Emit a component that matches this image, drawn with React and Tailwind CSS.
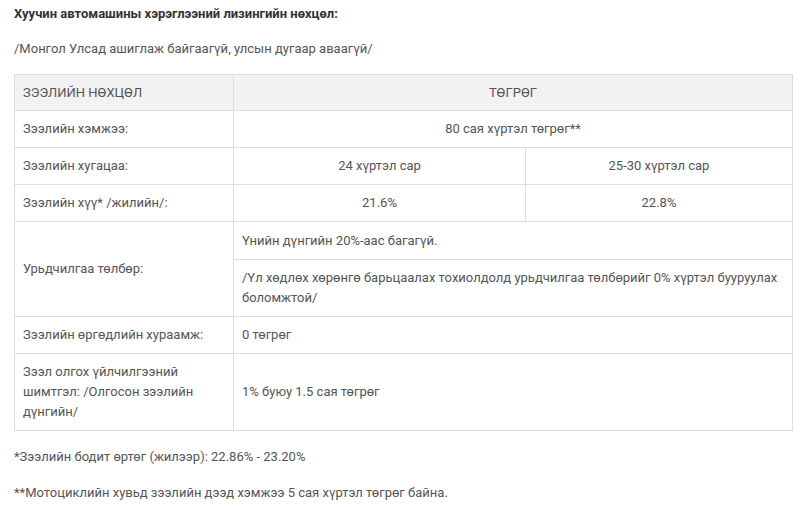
export default function App() {
  const cell = "border border-[#dddddd] px-2 py-2 align-middle";

  return (
    <div className="min-h-screen bg-white px-[14px] pt-[4px] font-['Roboto',sans-serif] text-[13px] leading-5 text-[#555]">
      <p className="font-bold text-[#333]">
        Хуучин автомашины хэрэглээний лизингийн нөхцөл:
      </p>
      <p className="mt-[15px]">/Монгол Улсад ашиглаж байгаагүй, улсын дугаар аваагүй/</p>

      <table className="mt-[15px] w-[778px] table-fixed border-collapse border border-[#dddddd]">
        <colgroup>
          <col className="w-[219px]" />
          <col className="w-[292px]" />
          <col className="w-[267px]" />
        </colgroup>
        <thead>
          <tr className="bg-[#f2f2f2]">
            <th className={`${cell} pt-[8px] pb-[7px] text-left font-normal uppercase`}>Зээлийн нөхцөл</th>
            <th colSpan={2} className={`${cell} pt-[8px] pb-[7px] text-center font-normal uppercase`}>
              Төгрөг
            </th>
          </tr>
        </thead>
        <tbody>
          <tr>
            <td className={cell}>Зээлийн хэмжээ:</td>
            <td colSpan={2} className={`${cell} text-center`}>
              80 сая хүртэл төгрөг**
            </td>
          </tr>
          <tr>
            <td className={cell}>Зээлийн хугацаа:</td>
            <td className={`${cell} text-center`}>24 хүртэл сар</td>
            <td className={`${cell} text-center`}>25-30 хүртэл сар</td>
          </tr>
          <tr>
            <td className={cell}>Зээлийн хүү* /жилийн/:</td>
            <td className={`${cell} text-center`}>21.6%</td>
            <td className={`${cell} text-center`}>22.8%</td>
          </tr>
          <tr>
            <td rowSpan={2} className={cell}>Урьдчилгаа төлбөр:</td>
            <td colSpan={2} className={`${cell} pt-[9px]`}>Үнийн дүнгийн 20%-аас багагүй.</td>
          </tr>
          <tr>
            <td colSpan={2} className={cell}>
              /Үл хөдлөх хөрөнгө барьцаалах тохиолдолд урьдчилгаа төлбөрийг 0% хүртэл бууруулах
              боломжтой/
            </td>
          </tr>
          <tr>
            <td className={cell}>Зээлийн өргөдлийн хураамж:</td>
            <td colSpan={2} className={cell}>0 төгрөг</td>
          </tr>
          <tr>
            <td className={cell}>Зээл олгох үйлчилгээний шимтгэл: /Олгосон зээлийн дүнгийн/</td>
            <td colSpan={2} className={cell}>1% буюу 1.5 сая төгрөг</td>
          </tr>
        </tbody>
      </table>

      <p className="mt-[16px]">*Зээлийн бодит өртөг (жилээр): 22.86% - 23.20%</p>
      <p className="mt-[16px]">**Мотоциклийн хувьд зээлийн дээд хэмжээ 5 сая хүртэл төгрөг байна.</p>
    </div>
  );
}
